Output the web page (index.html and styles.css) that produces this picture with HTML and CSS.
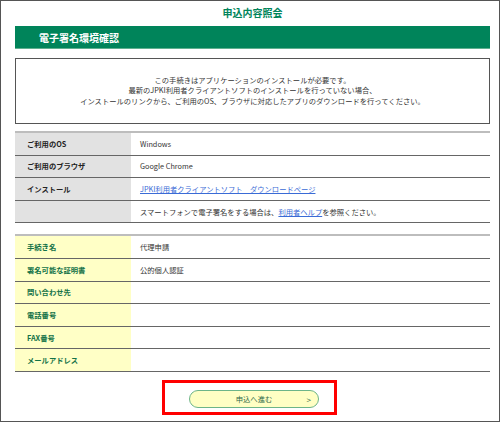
FILE: index.html
```html
<!DOCTYPE html>
<html lang="ja">
<head>
    <meta charset="UTF-8">
    <title>申込内容照会</title>
    <link rel="stylesheet" href="styles.css">
</head>
<body>
<div id="page">
    <!-- タイトル -->
    <div id="page-title">申込内容照会</div>

    <div class="section-bar">電子署名環境確認</div>

    <!-- 案内 -->
    <div class="notice">
        <p>この手続きはアプリケーションのインストールが必要です。</p>
        <p>最新のJPKI利用者クライアントソフトのインストールを行っていない場合、</p>
        <p>インストールのリンクから、ご利用のOS、ブラウザに対応したアプリのダウンロードを行ってください。</p>
    </div>

    <!-- 利用環境 -->
    <div class="info-table env">
        <div class="row"><div class="label">ご利用のOS</div><div class="value">Windows</div></div>
        <div class="row"><div class="label">ご利用のブラウザ</div><div class="value">Google Chrome</div></div>
        <div class="row"><div class="label">インストール</div><div class="value"><a href="#">JPKI利用者クライアントソフト　ダウンロードページ</a></div></div>
        <div class="row"><div class="label"></div><div class="value">スマートフォンで電子署名をする場合は、<a href="#">利用者ヘルプ</a>を参照ください。</div></div>
    </div>

    <!-- 手続き情報 -->
    <div class="info-table proc">
        <div class="row"><div class="label">手続き名</div><div class="value">代理申請</div></div>
        <div class="row"><div class="label">署名可能な証明書</div><div class="value">公的個人認証</div></div>
        <div class="row"><div class="label">問い合わせ先</div><div class="value"></div></div>
        <div class="row"><div class="label">電話番号</div><div class="value"></div></div>
        <div class="row"><div class="label">FAX番号</div><div class="value"></div></div>
        <div class="row"><div class="label">メールアドレス</div><div class="value"></div></div>
    </div>

    <div class="actions">
        <div class="highlight">
            <button class="next-btn" type="button"><span>申込へ進む</span><span class="arrow">&gt;</span></button>
        </div>
    </div>
</div>
</body>
</html>
```

FILE: styles.css
```css
body {
    margin: 0;
    padding: 0;
    font-family: "Noto Sans CJK JP", "Noto Sans", sans-serif;
    font-size: 7.3px;
    color: #333;
}

#page {
    width: 500px;
    height: 422px;
    box-sizing: border-box;
    border: 1px solid #555;
    padding: 0 9px 0 14px;
}

#page-title {
    height: 25px;
    line-height: 24px;
    text-align: center;
    font-size: 10px;
    font-weight: bold;
    color: #00845a;
}

.section-bar {
    height: 23px;
    line-height: 23px;
    padding-left: 24px;
    background: #00845a;
    border-bottom: 1px solid #5fb08f;
    box-sizing: border-box;
    color: #fff;
    font-size: 10px;
    font-weight: bold;
}

.notice {
    margin-top: 9px;
    height: 66px;
    box-sizing: border-box;
    border: 1px solid #555;
    padding-top: 16px;
    text-align: center;
}

.notice p {
    margin: 0;
    line-height: 10.4px;
}

.info-table {
    border-top: 2px solid #bdbdbd;
}

.info-table.env {
    margin-top: 7px;
}

.info-table.proc {
    margin-top: 11px;
}

.row {
    display: flex;
    height: 22.6px;
    box-sizing: border-box;
    border-bottom: 1px solid #666;
}

.label {
    width: 116px;
    flex-shrink: 0;
    padding-left: 12px;
    box-sizing: border-box;
    display: flex;
    align-items: center;
    font-weight: bold;
}

.value {
    flex: 1;
    padding-left: 9px;
    display: flex;
    align-items: center;
}

.env .label {
    background: #e2e2e2;
    color: #222;
}

.proc .label {
    background: #ffffc6;
    color: #137248;
}

.value a {
    color: #3a6bd6;
}

.actions {
    display: flex;
    justify-content: center;
    padding-right: 6px;
    margin-top: 8px;
}

.highlight {
    width: 175px;
    height: 35px;
    box-sizing: border-box;
    border: 3px solid #f00;
    padding: 7px 15px 0 24px;
}

.next-btn {
    width: 130px;
    height: 18px;
    border: 1px solid #6db588;
    border-radius: 9px;
    background: #ffffc4;
    display: flex;
    align-items: center;
    justify-content: center;
    position: relative;
    padding: 0;
    font-family: inherit;
    font-size: 7.3px;
    color: #2e6a4a;
}

.next-btn .arrow {
    position: absolute;
    right: 7px;
    top: 3px;
    font-size: 8px;
    color: #2e6a4a;
}
```
